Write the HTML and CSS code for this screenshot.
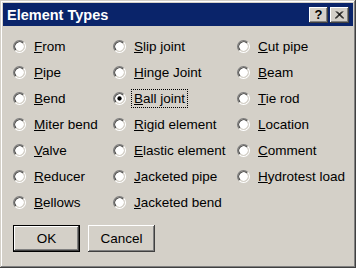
FILE: index.html
```html
<!DOCTYPE html>
<html lang="en">
<head>
  <meta charset="UTF-8">
  <title>Element Types</title>
  <link rel="stylesheet" href="styles.css">
</head>
<body>

  <svg class="defs" width="0" height="0">
    <symbol id="radio" viewBox="0 0 12 12">
      <circle cx="6" cy="6" r="4.2" fill="#fff"/>
      <path d="M2.11 9.89 A5.5 5.5 0 0 1 9.89 2.11" fill="none" stroke="#808080"/>
      <path d="M2.82 9.18 A4.5 4.5 0 0 1 9.18 2.82" fill="none" stroke="#404040"/>
      <path d="M9.89 2.11 A5.5 5.5 0 0 1 2.11 9.89" fill="none" stroke="#fff"/>
      <path d="M9.18 2.82 A4.5 4.5 0 0 1 2.82 9.18" fill="none" stroke="#d4d0c8"/>
    </symbol>
    <symbol id="radio-on" viewBox="0 0 12 12">
      <use href="#radio"/>
      <circle cx="6" cy="6" r="2" fill="#000"/>
    </symbol>
  </svg>

  <div class="window">
    <div class="titlebar">
      <span class="title">Element Types</span>
      <span class="tbtn help">?</span>
      <span class="tbtn close">
        <svg width="9" height="8" viewBox="0 0 9 8"><path d="M1 0.5 L8 7.5 M8 0.5 L1 7.5 M2 0.5 L9 7.5 M7 0.5 L0 7.5" stroke="#000" stroke-width="1" fill="none"/></svg>
      </span>
    </div>

    <div class="options">
      <div class="opt"><svg class="rb"><use href="#radio"/></svg><span class="lbl"><u>F</u>rom</span></div>
      <div class="opt"><svg class="rb"><use href="#radio"/></svg><span class="lbl"><u>P</u>ipe</span></div>
      <div class="opt"><svg class="rb"><use href="#radio"/></svg><span class="lbl"><u>B</u>end</span></div>
      <div class="opt"><svg class="rb"><use href="#radio"/></svg><span class="lbl"><u>M</u>iter bend</span></div>
      <div class="opt"><svg class="rb"><use href="#radio"/></svg><span class="lbl"><u>V</u>alve</span></div>
      <div class="opt"><svg class="rb"><use href="#radio"/></svg><span class="lbl"><u>R</u>educer</span></div>
      <div class="opt"><svg class="rb"><use href="#radio"/></svg><span class="lbl"><u>B</u>ellows</span></div>

      <div class="opt"><svg class="rb"><use href="#radio"/></svg><span class="lbl"><u>S</u>lip joint</span></div>
      <div class="opt"><svg class="rb"><use href="#radio"/></svg><span class="lbl"><u>H</u>inge Joint</span></div>
      <div class="opt"><svg class="rb"><use href="#radio-on"/></svg><span class="lbl focus"><u>B</u>all joint</span></div>
      <div class="opt"><svg class="rb"><use href="#radio"/></svg><span class="lbl"><u>R</u>igid element</span></div>
      <div class="opt"><svg class="rb"><use href="#radio"/></svg><span class="lbl"><u>E</u>lastic element</span></div>
      <div class="opt"><svg class="rb"><use href="#radio"/></svg><span class="lbl"><u>J</u>acketed pipe</span></div>
      <div class="opt"><svg class="rb"><use href="#radio"/></svg><span class="lbl"><u>J</u>acketed bend</span></div>

      <div class="opt"><svg class="rb"><use href="#radio"/></svg><span class="lbl"><u>C</u>ut pipe</span></div>
      <div class="opt"><svg class="rb"><use href="#radio"/></svg><span class="lbl"><u>B</u>eam</span></div>
      <div class="opt"><svg class="rb"><use href="#radio"/></svg><span class="lbl"><u>T</u>ie rod</span></div>
      <div class="opt"><svg class="rb"><use href="#radio"/></svg><span class="lbl"><u>L</u>ocation</span></div>
      <div class="opt"><svg class="rb"><use href="#radio"/></svg><span class="lbl"><u>C</u>omment</span></div>
      <div class="opt"><svg class="rb"><use href="#radio"/></svg><span class="lbl"><u>H</u>ydrotest load</span></div>
    </div>

    <div class="buttons">
      <button class="btn default">OK</button>
      <button class="btn">Cancel</button>
    </div>
  </div>

</body>
</html>
```

FILE: styles.css
```css
:root {
  --face: #d4d0c8;
  --shadow: #808080;
  --dark: #404040;
  --title: #0a246a;
}

body {
  margin: 0;
  font-family: 'Liberation Sans', Arial, sans-serif;
  color: #000;
}

.defs {
  position: absolute;
}

.window {
  box-sizing: border-box;
  width: 356px;
  height: 268px;
  padding: 3px;
  background: var(--face);
  box-shadow: inset -1px -1px var(--dark), inset 1px 1px var(--face),
              inset -2px -2px var(--shadow), inset 2px 2px #fff;
}

.titlebar {
  height: 23px;
  background: var(--title);
  display: flex;
  align-items: center;
  padding: 0 4px 0 4px;
}

.title {
  flex: 1;
  color: #fff;
  font-weight: bold;
  font-size: 14.5px;
}

.tbtn {
  box-sizing: border-box;
  width: 19px;
  height: 16px;
  background: var(--face);
  box-shadow: inset -1px -1px var(--dark), inset 1px 1px #fff,
              inset -2px -2px var(--shadow), inset 2px 2px var(--face);
  display: flex;
  align-items: center;
  justify-content: center;
}

.help {
  font-weight: bold;
  font-size: 13px;
  margin-right: 2px;
  padding-bottom: 1px;
}

.options {
  display: grid;
  grid-auto-flow: column;
  grid-template-rows: repeat(7, 26px);
  grid-template-columns: 100px 124px 1fr;
  margin: 7px 0 0 10px;
  font-size: 13.5px;
}

.opt {
  display: flex;
  align-items: center;
}

.rb {
  width: 13px;
  height: 13px;
  flex: none;
}

.lbl {
  margin-left: 5px;
  padding: 1px 2px;
  border: 1px solid transparent;
}

.lbl.focus {
  border: 1px dotted #000;
}

.buttons {
  display: flex;
  gap: 8px;
  margin: 10px 0 0 10px;
}

.btn {
  box-sizing: border-box;
  width: 67px;
  height: 27px;
  padding: 0;
  border: none;
  background: var(--face);
  font-family: 'Liberation Sans', Arial, sans-serif;
  font-size: 13.5px;
  color: #000;
  box-shadow: inset -1px -1px var(--dark), inset 1px 1px #fff,
              inset -2px -2px var(--shadow), inset 2px 2px var(--face);
}

.btn.default {
  border: 1px solid #000;
}
```
